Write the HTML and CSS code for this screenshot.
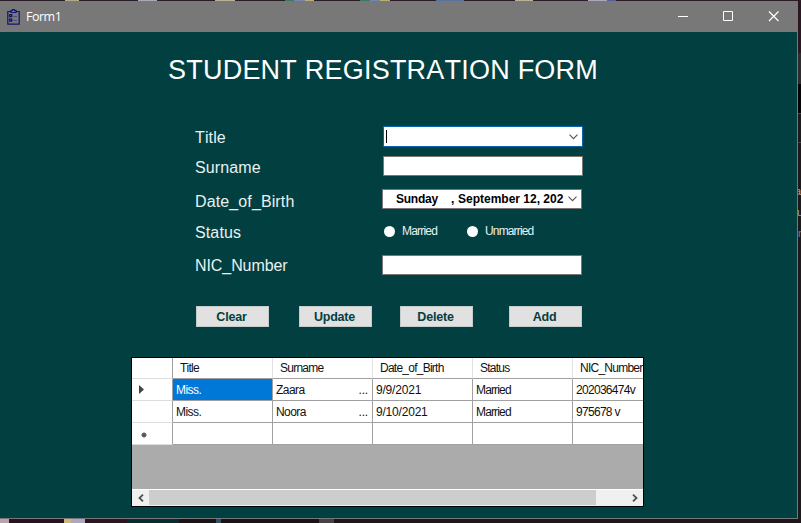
FILE: index.html
```html
<!DOCTYPE html>
<html lang="en">
<head>
<meta charset="utf-8">
<title>Form1</title>
<link rel="stylesheet" href="styles.css">
</head>
<body>
<div class="desktop-top"></div>
<div class="middle">
  <main class="window">
    <header class="titlebar">
      <svg class="app-icon" width="13" height="16" viewBox="0 0 13 16" fill="none" stroke="#151568">
        <path d="M4 2.5H.8v12.7h11.4V2.5H9M4 3.5h5v-2H7.5v-1h-2v1H4z" stroke-width="1.2"/>
        <path d="M2.7 5.7h2v2h-2zM2.7 10.2h2v2h-2z" stroke-width="1.3"/>
        <path d="M6.5 7.5H10M6.5 11.5H10" stroke="#4c4c78"/>
      </svg>
      <span class="caption">Form1</span>
      <svg class="controls" width="102" height="11" viewBox="0 0 102 11" fill="none" stroke="#fff">
        <path d="M0 5.5h10M45.5.5h9v9h-9z"/>
        <path d="M91 .5l9.5 9.5M100.500 .5l-9.500 9.500" stroke-width="1.2"/>
      </svg>
    </header>
    <h1>STUDENT REGISTRATION FORM</h1>
    <form class="fields">
      <div class="row row-title"><label>Title</label>
        <div class="box combo"><i class="caret"></i><svg class="chev" width="9" height="6" viewBox="0 0 9 6"><path d="M.5.7l4 4 4-4"/></svg></div></div>
      <div class="row row-surname"><label>Surname</label><div class="box"></div></div>
      <div class="row row-birth"><label>Date_of_Birth</label>
        <div class="box date"><span class="day">Sunday</span><span class="comma">,</span><span class="rest">September 12, 202</span><svg class="chev" width="9" height="6" viewBox="0 0 9 6"><path d="M.5.7l4 4 4-4"/></svg></div></div>
      <div class="row row-status"><label>Status</label>
        <div class="radios"><i class="radio"></i><span class="married">Married</span><i class="radio"></i><span class="unmarried">Unmarried</span></div></div>
      <div class="row row-nic"><label>NIC_Number</label><div class="box"></div></div>
      <div class="buttons">
        <div class="btn">Clear</div><div class="btn">Update</div><div class="btn">Delete</div><div class="btn">Add</div>
      </div>
    </form>
    <section class="grid">
      <div class="cells">
        <div class="hd rh"></div><div class="hd">Title</div><div class="hd">Surname</div><div class="hd">Date_of_Birth</div><div class="hd">Status</div><div class="hd">NIC_Number</div>
        <div class="rh"><svg width="5" height="9" viewBox="0 0 5 9"><path d="M0 0l5 4.500-5 4.500z" fill="#444"/></svg></div><div class="sel">Miss.</div><div>Zaara<b>...</b></div><div class="date-cell">9/9/2021</div><div class="state">Married</div><div class="num">202036474v</div>
        <div class="rh"></div><div>Miss.</div><div>Noora<b>...</b></div><div class="date-cell">9/10/2021</div><div class="state">Married</div><div class="num">975678 v</div>
        <div class="rh new"><svg width="6" height="6" viewBox="0 0 6 6"><circle cx="3" cy="3" r="2.100" fill="#555"/><path d="M3 0v6M0 3h6M1 1l4 4M5 1L1 5" stroke="#555" stroke-width=".8"/></svg></div><div></div><div></div><div></div><div></div><div></div>
      </div>
      <div class="scroll">
        <div class="arrow"><svg width="6" height="8" viewBox="0 0 6 8"><path d="M5 .7L1.500 4 5 7.300"/></svg></div>
        <div class="thumb"></div>
        <div class="arrow right"><svg width="6" height="8" viewBox="0 0 6 8"><path d="M1 .7L4.500 4 1 7.300"/></svg></div>
      </div>
    </section>
  </main>
  <aside class="behind"><span class="peek-a">a</span><span class="peek-u">u</span><span class="peek-r">n</span></aside>
</div>
<div class="desktop-bottom"></div>
</body>
</html>
```
FILE: styles.css
```css
* { box-sizing: border-box; }
body {
  margin: 0; width: 801px; height: 523px; overflow: hidden;
  background: #1d1819; font-family: "Liberation Sans", Arial, sans-serif;
  display: flex; flex-direction: column; font-kerning: none;
}
.desktop-top {
  height: 1px; flex: none;
  background: linear-gradient(90deg, #2a1d28 65px, #b3ad83 65px 79px, #2a1d28 79px 138px, #aaa9bb 138px 157px, #2a1d28 157px 215px, #b8b394 215px 235px, #2a1d28 235px 285px, #3f775f 285px 294px, #7187b0 294px 305px, #bfae72 305px 314px, #2a1d28 314px 360px, #3f775f 360px 370px, #7187b0 370px 380px, #bfae72 380px 390px, #2a1d28 390px 436px, #5874a0 436px 464px, #2a1d28 464px 515px, #b8b394 515px 533px, #2a1d28 533px 588px, #aaa9bb 588px 607px, #555f9c 607px 616px, #2a1d28 616px);
}
.middle { display: flex; height: 518px; flex: none; }
.window { width: 798px; height: 518px; background: #023f40; border-right: 1px solid #777; border-bottom: 1px solid #777; }
.titlebar { height: 31px; background: #787878; display: flex; align-items: center; padding-left: 7px; color: #fff; }
.caption { margin-left: 6px; font: 12.5px "Open Sans", sans-serif; letter-spacing: -.5px; }
.controls { margin: 0 17px 0 auto; }
h1 { margin: 22px 0 0 168px; font-size: 27px; line-height: 32px; font-weight: 400; color: #fff; letter-spacing: .22px; white-space: nowrap; }
.fields { margin: 40px 0 0 195px; width: 388px; }
.row { display: flex; color: #e9f1f1; }
.row label { width: 188px; flex: none; font-size: 16px; line-height: 20px; letter-spacing: .12px; }
.box { width: 200px; height: 20px; background: #fff; border: 1px solid #777; }
.row-title { height: 30px; }
.row-title label, .row-surname label { margin-top: 2px; }
.combo { height: 21px; border-color: #0866b0; display: flex; align-items: center; padding: 0 4px 0 2px; }
.caret { width: 1px; height: 13px; background: #000; }
.chev { margin-left: auto; fill: none; stroke: #555; stroke-width: 1.1; flex: none; }
.row-surname { height: 33px; }
.row-birth { height: 34px; }
.row-birth label, .row-status label, .row-nic label { width: 187px; }
.row-birth label { margin-top: 3px; }
.date { display: flex; align-items: center; padding: 0 4px 0 13px; font: bold 12px/18px "Liberation Sans", sans-serif; color: #000; white-space: pre; }
.day { width: 55px; letter-spacing: -.25px; }
.comma { width: 7px; }
.rest { width: 107px; letter-spacing: 0; }
.row-status { height: 32px; }
.row-nic label { margin-top: 1px; letter-spacing: -.08px; }
.radios { display: flex; height: 16px; align-items: center; font-size: 12px; padding-left: 2px; }
.radio { width: 11px; height: 11px; border-radius: 50%; background: #fff; }
.married { margin-left: 7px; width: 65px; letter-spacing: -.8px; }
.unmarried { margin-left: 7px; letter-spacing: -.85px; }
.row-nic { height: 51px; }
.buttons { display: flex; padding-left: 1px; }
.btn { width: 73px; height: 21px; background: #e1e1e1; border: 1px solid #c5cccc; color: #033f3f; font-weight: 700; font-size: 12.5px; line-height: 20px; text-align: center; letter-spacing: -.2px; padding-right: 2px; }
.btn:nth-child(2) { margin-left: 30px; }
.btn:nth-child(3) { margin-left: 28px; }
.btn:nth-child(4) { margin-left: 36px; }
.grid { margin: 30px 0 0 131px; width: 513px; height: 150px; background: #ababab; border: 1px solid #000; display: flex; flex-direction: column; justify-content: space-between; }
.cells { display: grid; grid-template-columns: 41px 100px 100px 100px 100px 70px; grid-template-rows: 21px 22px 22px 22px; font-size: 12px; color: #111; }
.cells > div { background: #fff; border-right: 1px solid #a0a0a0; border-bottom: 1px solid #a0a0a0; padding-left: 3px; line-height: 22px; letter-spacing: -.55px; white-space: nowrap; display: flex; }
.cells > div:nth-child(6n) { border-right: 0; }
.cells > .hd { padding-left: 7px; line-height: 21px; border-right-color: #e2e2e2; letter-spacing: -.75px; }
.cells > .hd.rh { border-right-color: #a0a0a0; }
.cells > .num { letter-spacing: -.7px; }
.cells > .date-cell { letter-spacing: -.2px; }
.cells > .state { letter-spacing: -.85px; }
.cells > .rh { align-items: center; padding-left: 7px; border-bottom-color: #ddd; }
.cells > .new { padding-left: 9px; padding-top: 3px; }
.cells > .sel { background: #0078d7; color: #fff; }
.cells b { font-weight: 400; margin-left: auto; padding-right: 4px; letter-spacing: -.2px; }
.scroll { height: 17px; background: #f0f0f0; border-top: 1px solid #fff; display: flex; }
.arrow { width: 17px; display: flex; align-items: center; justify-content: center; }
.arrow path { fill: none; stroke: #505050; stroke-width: 1.8; }
.thumb { width: 447px; height: 15px; background: #cdcdcd; }
.right { margin-left: auto; }
.behind { width: 3px; overflow: hidden; background: linear-gradient(#2a1722 52px, #2d2d2d 52px 83px, #050505 83px 112px, #444 112px 113px, #1c1c1c 113px 141px, #444 141px 142px, #1c1a1a 142px); color: #aaa; font-size: 11px; line-height: 13px; display: flex; flex-direction: column; }
.peek-a { margin: 184px 0 0 -3px; }
.peek-u { margin: 8px 0 0 -1px; }
.peek-r { margin-top: 8px; color: #7777a5; }
.desktop-bottom {
  height: 4px; flex: none;
  background: linear-gradient(90deg, #b9a4ad 9px, #25141f 9px 64px, #cbb975 64px 71px, #a9a9c0 71px 85px, #291621 85px 127px, #072c2e 127px 179px, #181416 179px 216px, #315462 216px 221px, #181416 221px 319px, #444 319px 334px, #1c1819 334px);
}
```
